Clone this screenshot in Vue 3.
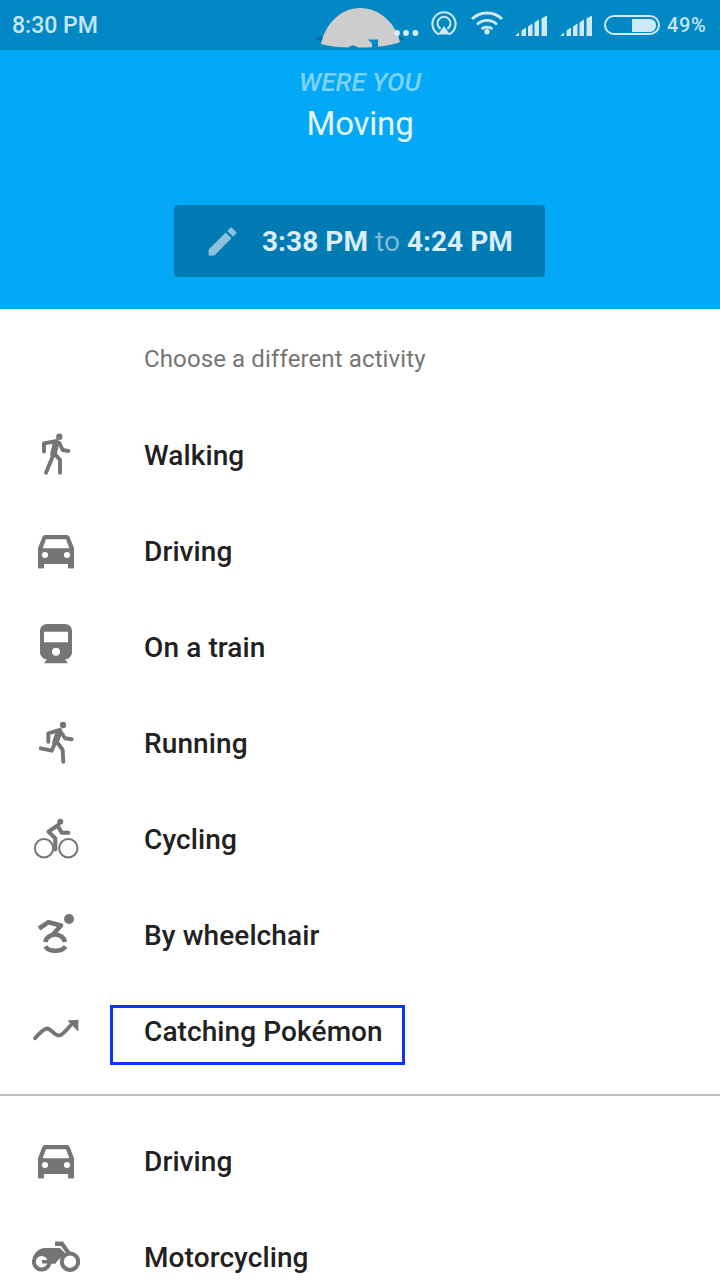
<template>
  <div class="page">
    <div class="status">
      <span class="clock">8:30 PM</span>
      <svg class="blob" width="110" height="55" viewBox="310 0 110 55">
        <ellipse cx="360" cy="39" rx="44" ry="4.5" fill="#0a6a98" />
        <path d="M321 44C325 24 341 8 360 8C380 8 396 24 400 42C390 46 375 47.5 360 47.5C345 47.5 330 47 321 44Z" fill="#cdcdcd" />
        <path d="M348 48C350 44.5 356 44.5 358 48Z" fill="#0288c4" />
        <path d="M368 39.5H378V48H372V43.5Z" fill="#0288c4" />
      </svg>
      <div class="tray">
        <svg class="dots" width="30" height="10" viewBox="0 0 30 10">
          <circle cx="5" cy="5" r="2.9" />
          <circle cx="14" cy="5" r="2.9" />
          <circle cx="23.4" cy="5" r="2.9" />
        </svg>
        <svg class="hotspot" width="28" height="28" viewBox="0 0 28 28">
          <path d="M9 24.3A11.6 11.6 0 1 1 19 24.3M10.6 18.8A6.5 6.5 0 1 1 17.4 18.8" fill="none" />
          <path class="solid" d="M14 16L20 24.5H8Z" />
        </svg>
        <svg class="wifi" width="34" height="26" viewBox="0 0 34 26">
          <path d="M2 10C10 2 24 2 32 10M7 15.5C12.5 10 21.5 10 27 15.5M11.5 20C14.5 17.5 19.5 17.5 22.5 20" fill="none" />
          <circle class="solid" cx="17" cy="22.8" r="2.7" />
        </svg>
        <svg v-for="n in 2" :key="n" class="signal" width="32" height="22" viewBox="0 0 32 22">
          <path class="solid" d="M0 21L4 17.5V21ZM6.5 15.5L11 12.5V21H6.5ZM13 11.5L17.5 8.5V21H13ZM19.5 7.5L24 4.5V21H19.5ZM26.5 3.5L32 0.5V21H26.5Z" />
        </svg>
        <div class="battery"><div class="charge"></div></div>
        <span class="pct">49%</span>
      </div>
    </div>

    <div class="hero">
      <div class="were">WERE YOU</div>
      <div class="moving">Moving</div>
      <div class="time-btn">
        <svg class="pencil" width="37" height="37" viewBox="0 0 24 24">
          <path d="M3 17.25V21h3.75L17.81 9.94l-3.75-3.75L3 17.25zM20.71 7.04c.39-.39.39-1.02 0-1.41l-2.34-2.34c-.39-.39-1.02-.39-1.41 0l-1.83 1.83 3.75 3.75 1.83-1.83z" />
        </svg>
        <span class="time-text">3:38 PM <span class="to">to</span> 4:24 PM</span>
      </div>
    </div>

    <div class="hint">Choose a different activity</div>

    <div class="row">
      <svg class="icon" viewBox="0 0 48 48">
        <circle class="fill" cx="27.3" cy="5.7" r="3.2" />
        <path d="M12 20.5V12.3L24.7 10L21.3 24L14 41.7M27.3 12L30.7 19L36.3 20M22.5 22.5L28 29V41.7" />
        <path class="torso" d="M24 12L21.5 23" />
      </svg>
      <span class="label">Walking</span>
    </div>
    <div class="row">
      <svg class="icon" viewBox="0 0 48 48">
        <path class="fill" fill-rule="evenodd" d="M13 8H35C36.5 8 37.2 9 37.8 10.5L42 21V40C42 41 41.3 41.5 40.5 41.5H37.5C36.6 41.5 36 41 36 40V37H12V40C12 41 11.4 41.5 10.5 41.5H7.5C6.7 41.5 6 41 6 40V21L10.2 10.5C10.8 9 11.5 8 13 8ZM14 12.3L10.7 21.3H37.3L34 12.3ZM13 25A3 3 0 1 0 13 31A3 3 0 1 0 13 25ZM35 25A3 3 0 1 0 35 31A3 3 0 1 0 35 25Z" />
      </svg>
      <span class="label">Driving</span>
    </div>
    <div class="row">
      <svg class="icon" viewBox="0 0 48 48">
        <path class="fill" fill-rule="evenodd" d="M15 1H33C37 1 40 4 40 8V29C40 33 37 36 33 36.5L36 40.3H12L15 36.5C11 36 8 33 8 29V8C8 4 11 1 15 1ZM12 8.7V19.3H36V8.7ZM24 24.7A4 4 0 1 0 24 32.7A4 4 0 1 0 24 24.7Z" />
      </svg>
      <span class="label">On a train</span>
    </div>
    <div class="row">
      <svg class="icon" viewBox="0 0 48 48">
        <circle class="fill" cx="31" cy="6" r="3.2" />
        <path d="M16.3 22.7V14.3L28 10.8L23 24L19.7 31.7L8.7 29.3M29.7 14.3L33 19.3L39.7 20.3M24.7 22.7L30.7 31L31.3 42.7" />
        <path class="torso" d="M27 13L23.5 23" />
      </svg>
      <span class="label">Running</span>
    </div>
    <div class="row">
      <svg class="icon" viewBox="0 0 48 48">
        <circle class="fill" cx="28.3" cy="6.7" r="3" />
        <circle class="ring" cx="12" cy="33.3" r="9.2" />
        <circle class="ring" cx="36.3" cy="33.3" r="9.2" />
        <path class="bike" d="M26.3 10L16.5 16.7L23.3 23.3V34.5M26.3 11.7L29.7 17.7H36.3" />
      </svg>
      <span class="label">Cycling</span>
    </div>
    <div class="row">
      <svg class="icon" viewBox="0 0 48 48">
        <circle class="fill" cx="37" cy="8" r="5" />
        <path class="chair" d="M7 17.5L16.5 11.2L29 14.5L20.5 24M13.3 31A10 9 0 0 1 33 31" />
        <path class="chair" d="M13.3 35.5A11 7 0 0 0 33.5 35.5" />
      </svg>
      <span class="label">By wheelchair</span>
    </div>
    <div class="row">
      <svg class="icon" viewBox="0 0 48 48">
        <path class="thin" d="M3 31.3C7 27 11 22 15 21.5C19 21.5 22 28 26.5 28.5C31 28.5 35 22 39 18" />
        <path class="fill" d="M35.5 13.5L46.3 12.7V24.7Z" />
      </svg>
      <span class="label">Catching Pokémon</span>
      <div class="highlight"></div>
    </div>

    <div class="rule"></div>

    <div class="row">
      <svg class="icon" viewBox="0 0 48 48">
        <path class="fill" fill-rule="evenodd" d="M13 8H35C36.5 8 37.2 9 37.8 10.5L42 21V40C42 41 41.3 41.5 40.5 41.5H37.5C36.6 41.5 36 41 36 40V37H12V40C12 41 11.4 41.5 10.5 41.5H7.5C6.7 41.5 6 41 6 40V21L10.2 10.5C10.8 9 11.5 8 13 8ZM14 12.3L10.7 21.3H37.3L34 12.3ZM13 25A3 3 0 1 0 13 31A3 3 0 1 0 13 25ZM35 25A3 3 0 1 0 35 31A3 3 0 1 0 35 25Z" />
      </svg>
      <span class="label">Driving</span>
    </div>
    <div class="row">
      <svg class="icon" viewBox="0 0 48 48">
        <path class="fill" d="M23 8.5H31L42 24L38.5 26L29 13H23ZM1 27C1 20 7 15 13 15H28L33 20L23 30.5H10Z" />
        <circle class="moto" cx="9.7" cy="28.7" r="7.8" />
        <circle class="moto" cx="38" cy="28.7" r="8.2" />
        <path class="fill" d="M10 27H24V30.5H10Z" />
      </svg>
      <span class="label">Motorcycling</span>
    </div>
  </div>
</template>

<script setup>
</script>

<style>
html, body {
  margin: 0;
  background: #fff;
}
</style>

<style scoped>
.page {
  width: 720px;
  height: 1280px;
  overflow: hidden;
  font-family: Roboto, "Noto Sans", sans-serif;
  background: #fff;
}

.status {
  position: relative;
  height: 50px;
  box-sizing: border-box;
  padding-left: 12px;
  display: flex;
  align-items: center;
  background: #0288c4;
  color: #c6e6f5;
}
.clock {
  font-size: 23px;
  font-weight: 500;
}
.blob {
  position: absolute;
  left: 310px;
  top: 0;
}
.tray {
  position: absolute;
  top: 0;
  left: 392px;
  height: 50px;
  display: flex;
  align-items: flex-start;
}
.tray svg {
  flex: none;
}
.dots {
  margin-top: 27.5px;
  fill: #d8eef8;
}
.hotspot {
  margin: 10px 0 0 8px;
  stroke: #cfe9f6;
  stroke-width: 2;
}
.wifi {
  margin: 9px 0 0 12px;
  stroke: #cfe9f6;
  stroke-width: 2.8;
}
.solid {
  fill: #cfe9f6;
  stroke: none;
}
.signal {
  margin: 15px 0 0 11px;
}
.signal + .signal {
  margin-left: 13px;
}
.battery {
  flex: none;
  width: 56px;
  height: 20px;
  box-sizing: border-box;
  margin: 15px 0 0 12px;
  padding: 1.5px 2px;
  border: 2px solid #cfe9f6;
  border-radius: 10px;
  display: flex;
  justify-content: flex-end;
}
.charge {
  width: 24px;
  background: #cfe9f6;
  border-radius: 0 6px 6px 0;
}
.pct {
  margin: 13px 0 0 7px;
  font-size: 20px;
  font-weight: 500;
  line-height: 24px;
  letter-spacing: 0.6px;
}

.hero {
  height: 259px;
  box-sizing: border-box;
  padding-top: 17px;
  display: flex;
  flex-direction: column;
  align-items: center;
  background: #03a9f6;
}
.were {
  font-size: 26px;
  line-height: 30px;
  font-style: italic;
  font-weight: 500;
  color: #7dd2fa;
}
.moving {
  margin-top: 7px;
  font-size: 33px;
  line-height: 40px;
  letter-spacing: -0.2px;
  color: #e5f6fe;
}
.time-btn {
  align-self: flex-start;
  width: 371px;
  height: 72px;
  margin: 61px 0 0 174px;
  padding-left: 30px;
  box-sizing: border-box;
  display: flex;
  align-items: center;
  background: #027bb5;
  border-radius: 4px;
}
.pencil {
  fill: #8bc1dc;
}
.time-text {
  margin-left: 21px;
  font-size: 28px;
  font-weight: 700;
  letter-spacing: 0.05px;
  color: #d9eef8;
}
.to {
  font-weight: 400;
  color: #7fb8d6;
}

.hint {
  height: 98px;
  box-sizing: border-box;
  padding: 35px 0 0 144px;
  font-size: 24px;
  line-height: 30px;
  letter-spacing: 0.12px;
  color: #757575;
}

.row {
  position: relative;
  height: 96px;
  display: flex;
  align-items: center;
}
.icon {
  flex: none;
  width: 48px;
  height: 48px;
  margin: 0 64px 0 32px;
  fill: none;
  stroke: #757575;
  stroke-width: 3.9;
  stroke-linecap: round;
  stroke-linejoin: round;
}
.icon .fill {
  fill: #757575;
  stroke: none;
}
.icon .torso {
  stroke-width: 6.5;
}
.icon .ring {
  stroke-width: 2;
}
.icon .bike {
  stroke-width: 4;
}
.icon .chair {
  stroke-width: 4.6;
  stroke-linecap: butt;
}
.icon .thin {
  stroke-width: 3.8;
}
.icon .moto {
  stroke-width: 4;
  fill: #fff;
}
.label {
  font-size: 28px;
  font-weight: 500;
  letter-spacing: 0.1px;
  color: #212121;
}
.highlight {
  position: absolute;
  left: 110px;
  top: 22px;
  width: 295px;
  height: 60px;
  box-sizing: border-box;
  border: 3px solid #0a36f5;
}
.rule {
  height: 2px;
  margin-top: 15px;
  margin-bottom: 17px;
  background: #bdbdbd;
}
</style>
